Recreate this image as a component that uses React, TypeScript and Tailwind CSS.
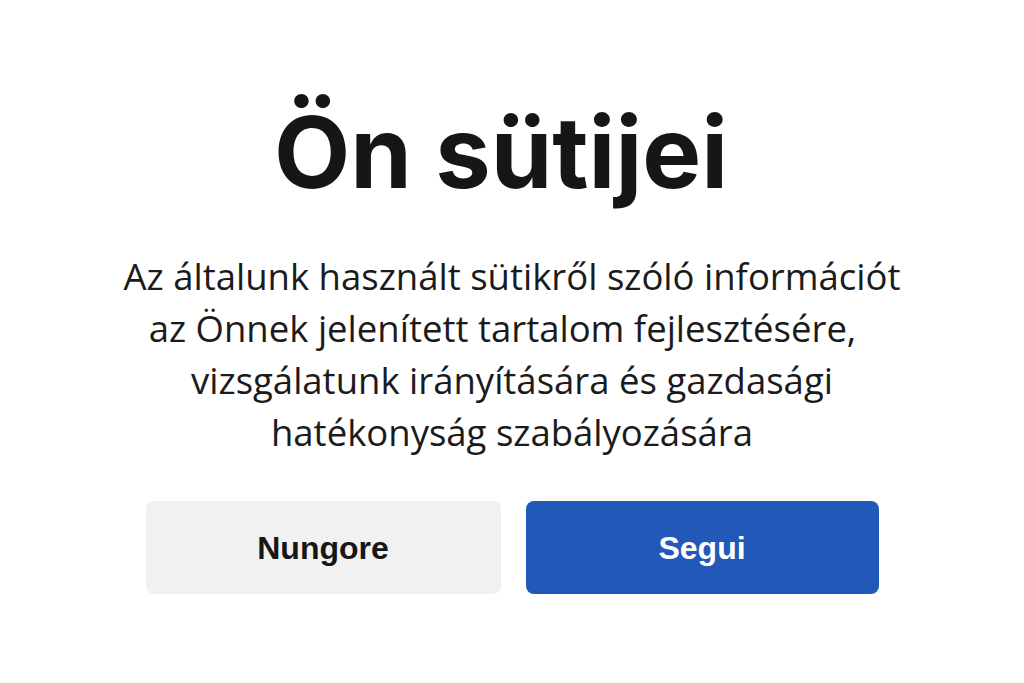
export default function App() {
  return (
    <div className="w-[1024px] h-[683px] bg-white flex flex-col items-center">
      <h1 className="mt-[88px] mr-[22px] text-[99px] leading-[128px] font-bold text-[#161616] [font-family:Inter,sans-serif]">
        Ön sütijei
      </h1>
      <p className="mt-[34px] text-center text-[36.5px] leading-[52px] text-[#1b1b1b] [font-family:'Open_Sans',sans-serif]">
        Az általunk használt sütikről szóló információt
        <br />
        az Önnek jelenített tartalom fejlesztésére,&nbsp;&nbsp;
        <br />
        vizsgálatunk irányítására és gazdasági
        <br />
        hatékonyság szabályozására
      </p>
      <div className="mt-[43px] flex gap-[25px]">
        <button className="w-[355px] h-[93px] rounded-[8px] bg-[#f1f1f1] text-[32px] font-bold text-[#161616] [font-family:'Liberation_Sans',sans-serif]">
          Nungore
        </button>
        <button className="w-[353px] h-[93px] rounded-[8px] bg-[#2258b8] text-[32px] font-bold text-white [font-family:'Liberation_Sans',sans-serif]">
          Segui
        </button>
      </div>
    </div>
  );
}
